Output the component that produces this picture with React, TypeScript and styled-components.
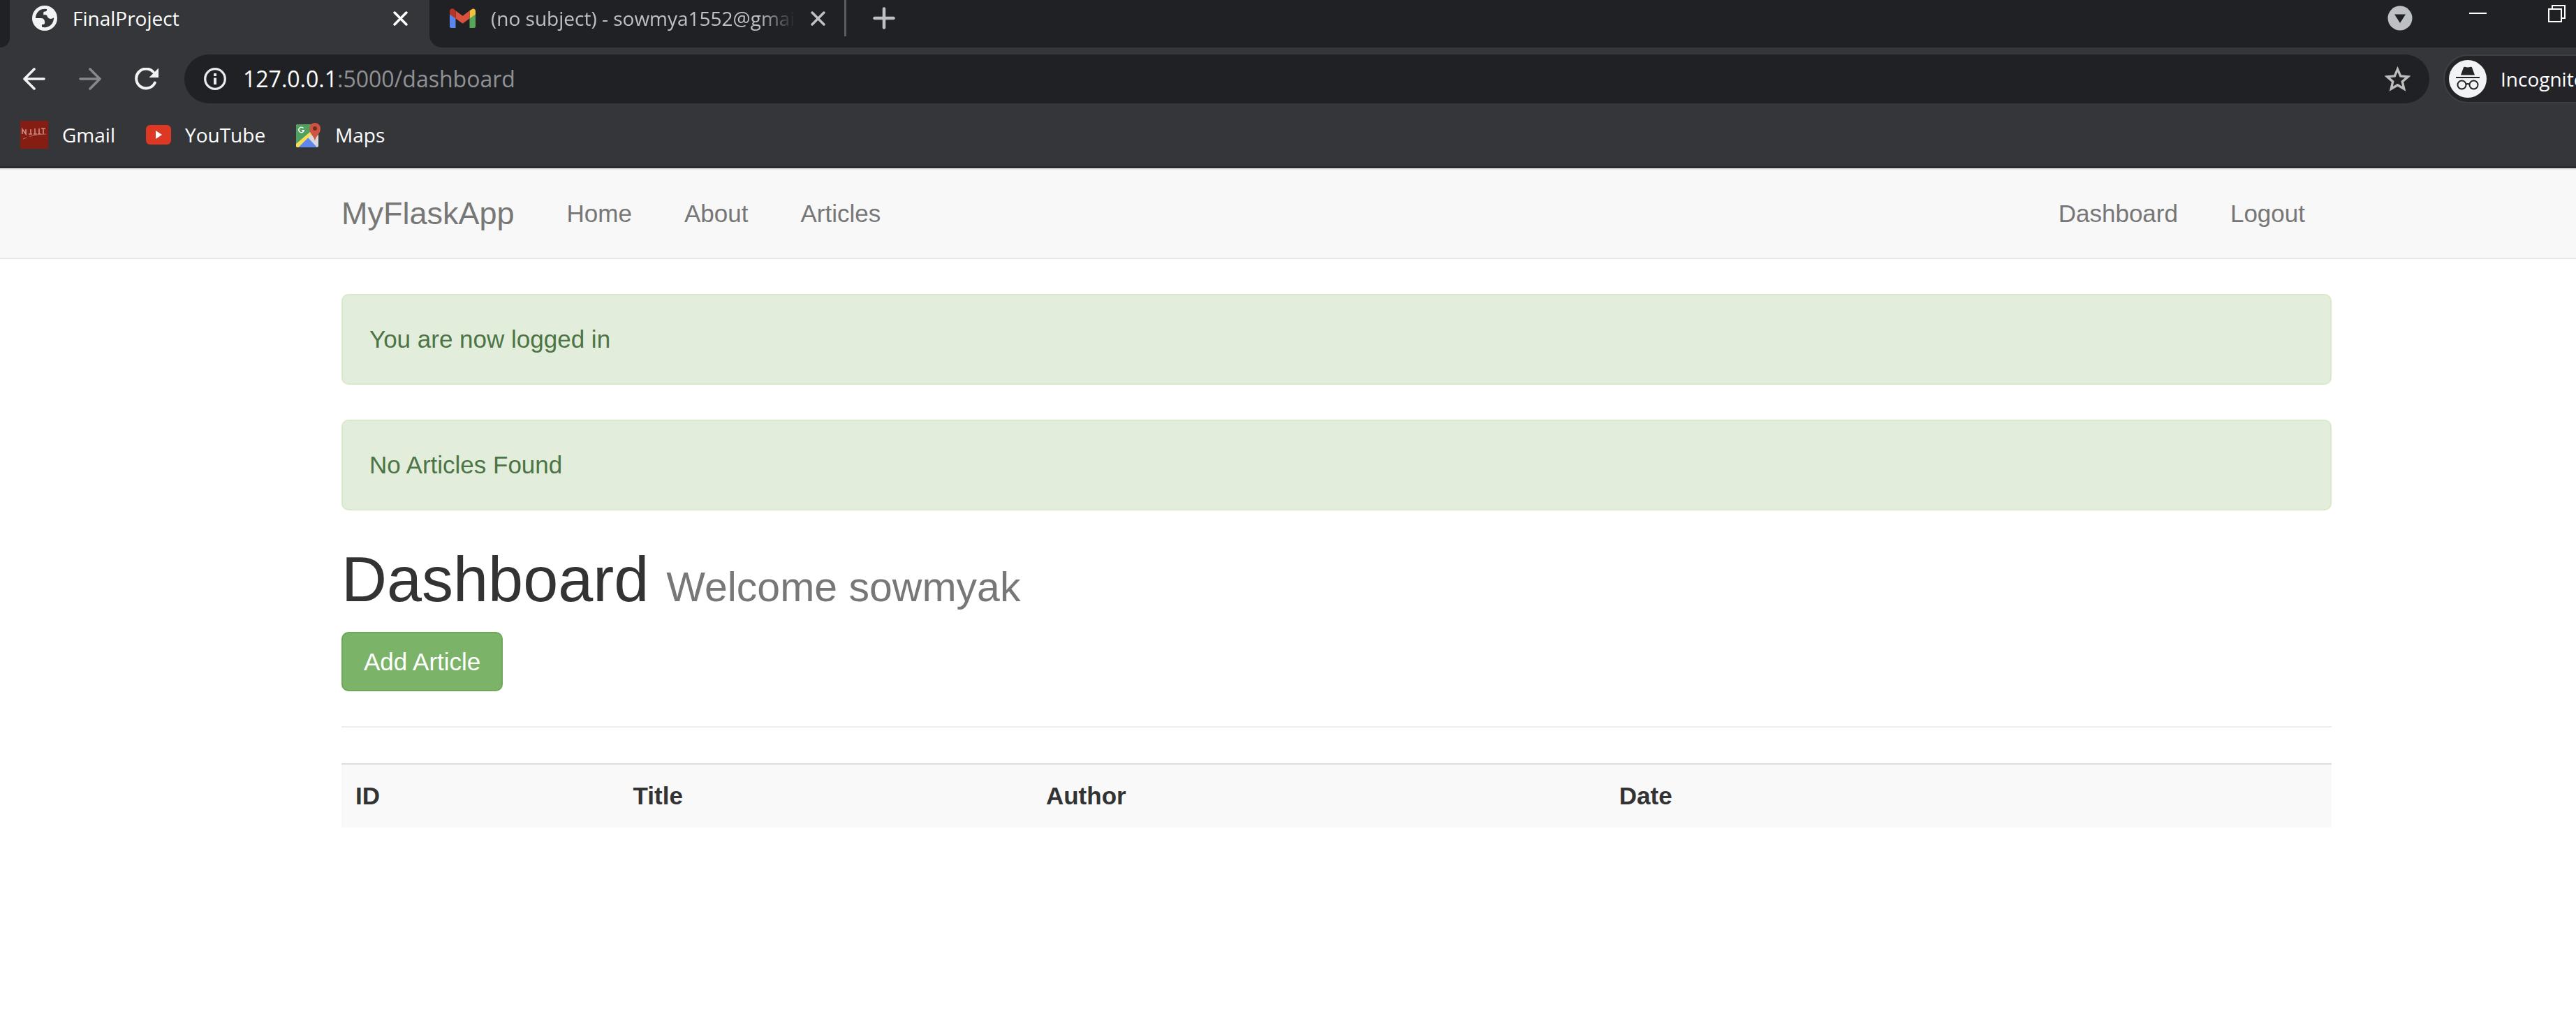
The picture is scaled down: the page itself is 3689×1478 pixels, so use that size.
import React from 'react';
import styled, { createGlobalStyle, css } from 'styled-components';

const uiFont = '"Open Sans", "Noto Sans", sans-serif';
const pageFont = '"Liberation Sans", Arial, sans-serif';

const GlobalStyle = createGlobalStyle`
  *, *::before, *::after { box-sizing: border-box; }
  body {
    margin: 0;
    background: #fff;
    color: #333;
    font: 35px/50px ${pageFont};
    overflow-x: hidden;
  }
  button { font: inherit; color: inherit; }
  svg { display: block; flex: none; }
`;

/* ---------- browser window ---------- */

const Chrome = styled.header`
  background: #35363a;
  border-bottom: 3px solid #2a2a2b;
  color: #fff;
  font: 28px/38px ${uiFont};
  overflow: hidden;
`;

const TabStrip = styled.div`
  display: flex;
  height: 68px;
`;

const StripEdge = styled.div`
  flex: none;
  width: 14px;
  background: #202124;
  border-bottom-right-radius: 16px;
`;

const StripRest = styled.div`
  flex: 1;
  display: flex;
  min-width: 0;
  background: #202124;
  border-bottom-left-radius: 18px;
`;

const Tab = styled.div<{ $active?: boolean }>`
  flex: none;
  display: flex;
  align-items: center;
  height: 52px;
  width: ${p => (p.$active ? 601 : 597)}px;
  padding: ${p => (p.$active ? '0 31px 0 32px' : '0 27px 0 29px')};
  gap: 22px;
  color: ${p => (p.$active ? '#fff' : '#bdc1c6')};
  ${p => !p.$active && css`border-right: 3px solid #5b5d61;`}
`;

const TabTitle = styled.span<{ $fade?: boolean }>`
  flex: 1;
  min-width: 0;
  overflow: hidden;
  white-space: nowrap;
  ${p => p.$fade && css`mask-image: linear-gradient(90deg, #000 88%, transparent);`}
`;

const IconButton = styled.button`
  flex: none;
  display: grid;
  place-items: center;
  padding: 0;
  border: 0;
  background: none;
  cursor: pointer;
`;

const NewTab = styled(IconButton)`
  width: 32px;
  height: 52px;
  margin-left: 38px;
  color: #bdc1c6;
`;

const WindowButtons = styled.div`
  display: flex;
  align-items: flex-start;
  margin-left: auto;
  padding-right: 15px;
`;

const WindowButton = styled(IconButton)<{ $height: number; $gap?: number }>`
  height: ${p => p.$height}px;
  margin-left: ${p => p.$gap ?? 0}px;
`;

const Toolbar = styled.div`
  display: flex;
  align-items: center;
  padding: 10px 0 0 33px;
`;

const NavButtons = styled.div`
  display: flex;
  gap: 48px;
  margin-right: 37px;
`;

const AddressBar = styled.div`
  flex: 1;
  display: flex;
  align-items: center;
  height: 70px;
  min-width: 0;
  padding: 0 27px 0 28px;
  border-radius: 35px;
  background: #202124;
`;

const Url = styled.span`
  flex: 1;
  margin-left: 24px;
  font-size: 32px;
  line-height: 44px;
  color: #8f9194;
`;

const UrlHost = styled.span`
  color: #fff;
`;

const Profile = styled.button`
  flex: none;
  display: flex;
  align-items: center;
  gap: 20px;
  width: 240px;
  height: 70px;
  margin: 0 -50px 0 20px;
  padding: 0 6px;
  border: 2px solid #3f4044;
  border-radius: 35px;
  background: #242428;
  white-space: nowrap;
`;

const Bookmarks = styled.nav`
  display: flex;
  align-items: center;
  gap: 44px;
  height: 90px;
  padding-left: 29px;
`;

const Bookmark = styled.a`
  display: flex;
  align-items: center;
  gap: 20px;
  color: #fff;
  text-decoration: none;
`;

/* ---------- page ---------- */

const Navbar = styled.nav`
  padding: 0 0 0 139px;
  border: solid #e7e7e7;
  border-width: 2px 0;
  background: #f8f8f8;
`;

const Container = styled.div`
  max-width: 2850px;
  margin: 0 auto;
`;

const NavRow = styled(Container)`
  display: flex;
  align-items: center;
  gap: 75px;
  padding: 38px 38px 38px 0;
`;

const NavLink = styled.a<{ $push?: boolean }>`
  color: #777;
  text-decoration: none;
  ${p => p.$push && css`margin-left: auto;`}
`;

const Brand = styled(NavLink)`
  font-size: 45px;
`;

const Main = styled.main`
  padding: 50px 0 50px 139px;
`;

const Alert = styled.div`
  margin-bottom: 50px;
  padding: 38px;
  border: 2px solid #dbe8c9;
  border-radius: 10px;
  background: #e2eedb;
  color: #4d7445;
`;

const Heading = styled.h1`
  margin: 0 0 25px;
  font-size: 90px;
  font-weight: 400;
  line-height: 99px;
`;

const Welcome = styled.small`
  font-size: 59px;
  line-height: 59px;
  color: #777;
`;

const AddButton = styled.button`
  display: block;
  padding: 16px 30px 15px;
  border: 2px solid #6da959;
  border-radius: 10px;
  background: #7bb368;
  color: #fff;
`;

const Rule = styled.hr`
  margin: 50px 0 51px;
  border: 0;
  border-top: 2px solid #eee;
`;

const Table = styled.table`
  width: 100%;
  border-spacing: 0;
  table-layout: fixed;
`;

const Th = styled.th<{ $share?: string }>`
  width: ${p => p.$share ?? 'auto'};
  padding: 20px;
  border-top: 2px solid #ddd;
  background: #f9f9f9;
  text-align: left;
`;

/* ---------- drawings ---------- */

const Globe = () => (
  <svg width="36" height="36" viewBox="0 0 36 36">
    <circle cx="18" cy="18" r="18" fill="#f1f3f4" />
    <path
      d="M14 5.300Q17 4.600 21 5V7C21 8.800 16.500 8 16.200 9.800V13.300C21.500 13 21 14 22.200 16.500C24 19.600 28 19.500 31 17.200C31.200 24 27 29.500 20.500 31Q17 31.500 14 30.800V27.200C18.500 27 18.200 26 18 23C17.800 19.500 15.500 18.200 13 18H5C5 12 9 7 14 5.300z"
      fill="#35363a"
    />
  </svg>
);

const Cross = ({ size }: { size: number }) => (
  <svg width={size} height={size} viewBox="0 0 20 20" stroke="currentColor" strokeWidth="3.400" strokeLinecap="round">
    <path d="M2 2l16 16M18 2L2 18" />
  </svg>
);

const GmailLogo = () => (
  <svg width="37" height="28" viewBox="0 0 37 28">
    <path d="M0 7l8.500 6.300V28H2.500A2.500 2.500 0 0 1 0 25.500z" fill="#5b86ee" />
    <path d="M37 7l-8.500 6.300V28h6a2.500 2.500 0 0 0 2.500-2.500z" fill="#57a65a" />
    <path d="M28.500 3.200L33 .5C35 0 37 1.500 37 4v4.500l-8.500 6z" fill="#f2c03d" />
    <path d="M8.500 3.200l10 7.600 10-7.600v11.300l-10 7.300-10-7.300z" fill="#da5140" />
    <path d="M8.500 3.200L6 1C3.500-.8 0 .8 0 4v4.500l8.500 6z" fill="#b5352a" />
  </svg>
);

const Plus = () => (
  <svg width="32" height="32" viewBox="0 0 32 32" stroke="currentColor" strokeWidth="4.500" strokeLinecap="round">
    <path d="M16 2.500v27M2.500 16h27" />
  </svg>
);

const TabSearch = () => (
  <svg width="36" height="36" viewBox="0 0 36 36">
    <circle cx="18" cy="18" r="17.500" fill="#bdc1c6" />
    <path d="M10 12.500h16L18 25z" fill="#202124" />
  </svg>
);

const Minimise = () => (
  <svg width="25" height="2" viewBox="0 0 25 2">
    <path d="M0 0h25v2H0z" fill="#fff" />
  </svg>
);

const Restore = () => (
  <svg width="25" height="25" viewBox="0 0 25 25" fill="none" stroke="#fff" strokeWidth="2">
    <path d="M1 6h18v18H1zM6 6V1h18v18h-5" />
  </svg>
);

const Arrow = ({ forward }: { forward?: boolean }) => (
  <svg
    width="32" height="32" viewBox="0 0 32 32" fill="none"
    stroke={forward ? '#87888b' : '#f1f3f4'} strokeWidth="3.600" strokeLinecap="round" strokeLinejoin="round"
  >
    <path d={forward ? 'M2 16h28M16 2l14 14-14 14' : 'M30 16H2M16 2L2 16l14 14'} />
  </svg>
);

const Reload = () => (
  <svg width="34" height="32" viewBox="0 0 34 32" fill="none">
    <path d="M26.500 6A14 14 0 1 0 28.800 21.500" stroke="#f1f3f4" strokeWidth="4" strokeLinecap="round" />
    <path d="M34 .5V14H20.500z" fill="#f1f3f4" />
  </svg>
);

const Info = () => (
  <svg width="32" height="32" viewBox="0 0 32 32">
    <circle cx="16" cy="16" r="14.300" fill="none" stroke="#e8eaed" strokeWidth="3.300" />
    <path d="M14 8h4v4h-4zM14 14.500h4V24h-4z" fill="#e8eaed" />
  </svg>
);

const Star = () => (
  <svg width="37" height="36" viewBox="0 0 37 36" fill="none" stroke="#bdbdbd" strokeWidth="3.400">
    <path d="M18.500 4.200l4.200 9.800 10.600.9-8 7 2.400 10.400-9.200-5.500-9.200 5.500 2.400-10.400-8-7 10.600-.9z" />
  </svg>
);

const IncognitoLogo = () => (
  <svg width="54" height="54" viewBox="0 0 54 54">
    <circle cx="27" cy="27" r="27" fill="#f1f3f4" />
    <path d="M21 10.500c.4-1 1-1 2-.7 2.500 1 5.500 1 8 0 1-.3 1.600-.3 2 .7l4 11H17zM10 24h34v2H10z" fill="#242428" />
    <g fill="none" stroke="#242428" strokeWidth="2">
      <circle cx="18.500" cy="35.500" r="6" />
      <circle cx="35.500" cy="35.500" r="6" />
      <path d="M24.500 35c1.500-1.200 3.500-1.200 5 0" />
    </g>
  </svg>
);

const CrestIcon = () => (
  <svg width="40" height="40" viewBox="0 0 40 40">
    <path d="M0 0h40v40H0z" fill="#851d12" />
    <g fill="none" stroke="#c98f88" strokeWidth="1.600">
      <path d="M3 19v-7l5 7v-7M15 12v7M12 19h5M21 11v8M19 19h5M27 11v8M25 19h5M33 11v8M30 11h6" />
      <path d="M37 19c-8 0-17 1.500-24 3.500M9 24l-5 2" stroke="#b06a62" strokeWidth="1.200" />
    </g>
  </svg>
);

const YouTubeLogo = () => (
  <svg width="36" height="28" viewBox="0 0 36 28">
    <rect width="36" height="28" rx="6" fill="#dd3823" />
    <path d="M14 8l9 6-9 6z" fill="#fff" />
  </svg>
);

const MapsLogo = () => (
  <svg width="36" height="36" viewBox="0 0 36 36">
    <rect y="3" width="32" height="33" rx="2.500" fill="#d9d9dc" />
    <path d="M2.500 3H25L21 14 1 34.500 0 33V5.500A2.500 2.500 0 0 1 2.500 3z" fill="#52a05f" />
    <path d="M16 21l14 15H3z" fill="#5f86ea" />
    <path d="M0 31L20 14l1.500 4L3.500 36H2.500A2.500 2.500 0 0 1 0 33.500z" fill="#f5dd58" />
    <path d="M27 27c-.8-7-8-10-8-18a8 8 0 0 1 16 0c0 8-7.200 11-8 18z" fill="#cf5342" />
    <circle cx="27" cy="9" r="3" fill="#772a22" />
    <path d="M10.500 8.500a3.800 3.800 0 1 0 .8 3.200H8" fill="none" stroke="#fff" strokeWidth="1.500" />
  </svg>
);

const columns: { label: string; share?: string }[] = [
  { label: 'ID', share: '13.95%' },
  { label: 'Title', share: '20.75%' },
  { label: 'Author', share: '28.8%' },
  { label: 'Date' },
];

const messages = ['You are now logged in', 'No Articles Found'];

export default function App() {
  return (
    <>
      <GlobalStyle />
      <Chrome>
        <TabStrip>
          <StripEdge />
          <Tab $active>
            <Globe />
            <TabTitle>FinalProject</TabTitle>
            <IconButton aria-label="Close tab"><Cross size={21} /></IconButton>
          </Tab>
          <StripRest>
            <Tab>
              <GmailLogo />
              <TabTitle $fade>(no subject) - sowmya1552@gmail.com</TabTitle>
              <IconButton aria-label="Close tab"><Cross size={21} /></IconButton>
            </Tab>
            <NewTab aria-label="New tab"><Plus /></NewTab>
            <WindowButtons>
              <WindowButton $height={52} aria-label="Search tabs"><TabSearch /></WindowButton>
              <WindowButton $height={38} $gap={81} aria-label="Minimise"><Minimise /></WindowButton>
              <WindowButton $height={39} $gap={88} aria-label="Restore"><Restore /></WindowButton>
            </WindowButtons>
          </StripRest>
        </TabStrip>
        <Toolbar>
          <NavButtons>
            <IconButton aria-label="Back"><Arrow /></IconButton>
            <IconButton aria-label="Forward"><Arrow forward /></IconButton>
            <IconButton aria-label="Reload"><Reload /></IconButton>
          </NavButtons>
          <AddressBar>
            <Info />
            <Url><UrlHost>127.0.0.1</UrlHost>:5000/dashboard</Url>
            <IconButton aria-label="Bookmark this page"><Star /></IconButton>
          </AddressBar>
          <Profile><IncognitoLogo />Incognito</Profile>
        </Toolbar>
        <Bookmarks>
          <Bookmark href="#gmail"><CrestIcon />Gmail</Bookmark>
          <Bookmark href="#youtube"><YouTubeLogo />YouTube</Bookmark>
          <Bookmark href="#maps"><MapsLogo />Maps</Bookmark>
        </Bookmarks>
      </Chrome>

      <Navbar>
        <NavRow>
          <Brand href="#">MyFlaskApp</Brand>
          <NavLink href="#home">Home</NavLink>
          <NavLink href="#about">About</NavLink>
          <NavLink href="#articles">Articles</NavLink>
          <NavLink href="#dashboard" $push>Dashboard</NavLink>
          <NavLink href="#logout">Logout</NavLink>
        </NavRow>
      </Navbar>

      <Main>
        <Container>
          {messages.map(text => <Alert key={text}>{text}</Alert>)}
          <Heading>Dashboard <Welcome>Welcome sowmyak</Welcome></Heading>
          <AddButton>Add Article</AddButton>
          <Rule />
          <Table>
            <thead>
              <tr>
                {columns.map(c => <Th key={c.label} $share={c.share} scope="col">{c.label}</Th>)}
              </tr>
            </thead>
          </Table>
        </Container>
      </Main>
    </>
  );
}
